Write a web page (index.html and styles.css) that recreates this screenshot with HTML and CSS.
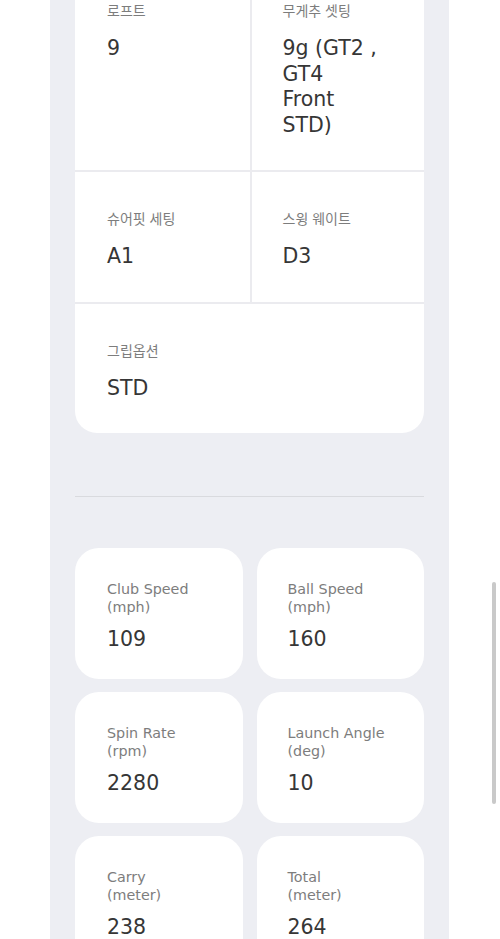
FILE: index.html
```html
<!DOCTYPE html>
<html lang="ko">
<head>
<meta charset="utf-8">
<title>Spec</title>
<link rel="stylesheet" href="styles.css">
</head>
<body>
<div class="page">
  <div class="content">
    <section class="spec-card">
      <div class="cell">
        <div class="label">로프트</div>
        <div class="value">9</div>
      </div>
      <div class="cell cell-right">
        <div class="label">무게추 셋팅</div>
        <div class="value">9g (GT2 , GT4 Front STD)</div>
      </div>
      <div class="cell">
        <div class="label">슈어핏 세팅</div>
        <div class="value">A1</div>
      </div>
      <div class="cell cell-right">
        <div class="label">스윙 웨이트</div>
        <div class="value">D3</div>
      </div>
      <div class="cell cell-full">
        <div class="label">그립옵션</div>
        <div class="value">STD</div>
      </div>
    </section>

    <hr class="divider">

    <section class="stats">
      <div class="stat">
        <div class="stat-label">Club Speed<br>(mph)</div>
        <div class="stat-value">109</div>
      </div>
      <div class="stat">
        <div class="stat-label">Ball Speed<br>(mph)</div>
        <div class="stat-value">160</div>
      </div>
      <div class="stat">
        <div class="stat-label">Spin Rate<br>(rpm)</div>
        <div class="stat-value">2280</div>
      </div>
      <div class="stat">
        <div class="stat-label">Launch Angle<br>(deg)</div>
        <div class="stat-value">10</div>
      </div>
      <div class="stat">
        <div class="stat-label">Carry<br>(meter)</div>
        <div class="stat-value">238</div>
      </div>
      <div class="stat">
        <div class="stat-label">Total<br>(meter)</div>
        <div class="stat-value">264</div>
      </div>
    </section>
  </div>
</div>
<div class="scrollbar"></div>
</body>
</html>
```
FILE: styles.css
```css
html, body {
  margin: 0;
  padding: 0;
  background: #ffffff;
  overflow: hidden;
  height: 939px;
}

body {
  font-family: "DejaVu Sans", "Noto Sans CJK KR", sans-serif;
  color: #333333;
}

.page {
  width: 399px;
  margin-left: 50px;
  background: #edeef3;
  padding: 0 25px;
  box-sizing: border-box;
  height: 939px;
  overflow: hidden;
}

.content {
  margin-top: -36px;
}

.spec-card {
  background: #ffffff;
  border-radius: 22px;
  display: grid;
  grid-template-columns: 1fr 1fr;
  overflow: hidden;
}

.cell {
  padding: 36px 44px 32px 32px;
  border-bottom: 2px solid #ebebef;
  display: flex;
  flex-direction: column;
  gap: 16px;
}

.cell-right {
  border-left: 2px solid #ebebef;
  padding-left: 31px;
}

.cell-full {
  grid-column: span 2;
  border-bottom: none;
}

.label {
  font-family: "Noto Sans CJK KR", sans-serif;
  font-size: 14px;
  line-height: 20px;
  color: #7d7d7d;
  font-weight: 400;
}

.value {
  font-size: 20.5px;
  line-height: 25.5px;
  color: #363636;
}

.divider {
  border: none;
  border-top: 1px solid #d9dade;
  margin: 63px 0 51px;
  height: 0;
}

.stats {
  display: grid;
  grid-template-columns: 1fr 1fr;
  column-gap: 14px;
  row-gap: 13px;
}

.stat {
  background: #ffffff;
  border-radius: 24px;
  padding: 32px 16px 27px 32px;
  display: flex;
  flex-direction: column;
  gap: 10px;
}

.stat:nth-child(even) {
  padding-left: 31px;
}

.stat-label {
  font-size: 14.3px;
  line-height: 18px;
  color: #7d7d7d;
}

.stat-value {
  font-size: 20.5px;
  line-height: 26px;
  color: #363636;
}

.scrollbar {
  position: absolute;
  left: 492px;
  top: 582px;
  width: 4px;
  height: 222px;
  background: #c9c9c9;
  border-radius: 2px;
}
```
